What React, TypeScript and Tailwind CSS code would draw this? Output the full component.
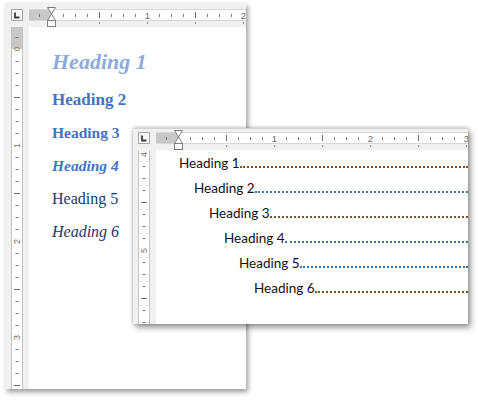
import React from "react";

const ORIGIN = 22;

function TabSelector() {
  return (
    <div className="w-[12px] h-[12px] border border-[#a6a6a6] bg-[#f7f7f7] flex items-center justify-center">
      <svg width="10" height="10" viewBox="0 0 10 10">
        <path d="M3 2.5V7.5H7.5" fill="none" stroke="#3c3c3c" strokeWidth="1.8" />
      </svg>
    </div>
  );
}

function HRuler({ width }: { width: number }) {
  const marks: React.ReactNode[] = [];
  for (let k = -1; ORIGIN + k * 12 < width + 6; k++) {
    const x = ORIGIN + k * 12 + 0.5;
    if (k === 0) continue;
    if (k % 8 === 0) {
      marks.push(
        <text key={k} x={x} y={12.5} fontSize="9.5" textAnchor="middle" fill="#6a6a6a" fontFamily="Liberation Sans, sans-serif">
          {k / 8}
        </text>
      );
    } else if (k % 4 === 0) {
      marks.push(<line key={k} x1={x} x2={x} y1={6} y2={12} stroke="#6e6e6e" />);
    } else {
      marks.push(<line key={k} x1={x} x2={x} y1={8} y2={11} stroke="#7a7a7a" />);
    }
  }
  const tabs: React.ReactNode[] = [];
  for (let m = 1; ORIGIN + m * 48 < width; m++) {
    const x = ORIGIN + m * 48 + 0.5;
    tabs.push(<line key={m} x1={x} x2={x} y1={16} y2={18} stroke="#8a8a8a" />);
  }
  const c = ORIGIN + 0.5;
  return (
    <svg width={width} height="21" className="block">
      <rect x="0" y="3" width={width} height="12" fill="#ffffff" />
      <rect x="0" y="3" width={ORIGIN} height="12" fill="#c8c8c8" />
      <line x1="0" x2={width} y1="3.5" y2="3.5" stroke="#d6d6d6" />
      <line x1="0" x2={width} y1="14.5" y2="14.5" stroke="#d6d6d6" />
      {marks}
      {tabs}
      <path d={`M${c - 4} 1.5H${c + 4}L${c} 8Z`} fill="#fff" stroke="#7d7d7d" />
      <path d={`M${c} 8L${c + 4} 14.5H${c - 4}Z`} fill="#fff" stroke="#7d7d7d" />
      <rect x={c - 4} y="14.5" width="8" height="6" fill="#fff" stroke="#7d7d7d" />
    </svg>
  );
}

function VRuler({ height, origin, base, dark }: { height: number; origin: number; base: number; dark: boolean }) {
  const marks: React.ReactNode[] = [];
  const kStart = -Math.floor(origin / 12);
  for (let k = kStart; origin + k * 12 < height; k++) {
    const y = origin + k * 12 + 0.5;
    if (k % 8 === 0) {
      if (k === 0 && dark) {
        marks.push(<rect key={k} x="3.5" y={y - 2} width="5" height="3" rx="1.5" fill="none" stroke="#a98a6e" />);
      } else {
        marks.push(
          <text key={k} x="6" y={y} fontSize="9" textAnchor="middle" dominantBaseline="central" fill="#7a6a5a" fontFamily="Liberation Sans, sans-serif" transform={`rotate(-90 6 ${y})`}>
            {k / 8 + base}
          </text>
        );
      }
    } else if (k % 4 === 0) {
      marks.push(<line key={k} x1="3" x2="9" y1={y} y2={y} stroke="#6e6e6e" />);
    } else {
      marks.push(<line key={k} x1="4.5" x2="7.5" y1={y} y2={y} stroke="#7a7a7a" />);
    }
  }
  return (
    <svg width="12" height={height} className="block">
      <rect x="0" y="0" width="12" height={height} fill="#ffffff" />
      {dark && <rect x="0" y="0" width="12" height={origin} fill="#c8c8c8" />}
      <line x1="0.5" x2="0.5" y1="0" y2={height} stroke="#c2c2c2" />
      <line x1="11.5" x2="11.5" y1="0" y2={height} stroke="#c2c2c2" />
      {marks}
    </svg>
  );
}

const headings = [
  { t: "Heading 1", c: "text-[22px] font-bold italic text-[#8eaadb] h-[36px]" },
  { t: "Heading 2", c: "text-[17px] font-bold text-[#4472c4] h-[33px] mt-[3px]" },
  { t: "Heading 3", c: "text-[15.5px] font-bold text-[#4472c4] h-[33px]" },
  { t: "Heading 4", c: "text-[15.5px] font-bold italic text-[#4472c4] h-[33px]" },
  { t: "Heading 5", c: "text-[16px] text-[#1f3864] h-[33px]" },
  { t: "Heading 6", c: "text-[16px] italic text-[#1f3864] h-[33px]" },
];

const toc = [
  { t: "Heading 1", pad: "pl-[23px]", dot: "border-[#8a4b1e]" },
  { t: "Heading 2", pad: "pl-[38px]", dot: "border-[#2e75b6]" },
  { t: "Heading 3", pad: "pl-[53px]", dot: "border-[#8a4b1e]" },
  { t: "Heading 4", pad: "pl-[68px]", dot: "border-[#2e75b6]" },
  { t: "Heading 5", pad: "pl-[83px]", dot: "border-[#2e75b6]" },
  { t: "Heading 6", pad: "pl-[98px]", dot: "border-[#8a4b1e]" },
];

export default function App() {
  return (
    <div className="relative w-[478px] h-[402px] bg-white overflow-hidden">
      {/* back window: heading styles */}
      <div className="absolute left-[5px] top-[3px] w-[241px] h-[386px] flex flex-col bg-[#f0f0f0] shadow-[2px_3px_5px_rgba(0,0,0,0.4)]">
        <div className="flex items-start h-[24px] shrink-0">
          <div className="ml-[6px] mt-[6px]">
            <TabSelector />
          </div>
          <div className="ml-[6px] mt-[3px]">
            <HRuler width={217} />
          </div>
        </div>
        <div className="flex flex-1 min-h-0">
          <div className="ml-[6px]">
            <VRuler height={362} origin={22} base={0} dark />
          </div>
          <div className="ml-[6px] flex-1 bg-white pt-[17px] pl-[23px] font-['Liberation_Serif',serif]">
            {headings.map((h) => (
              <div key={h.t} className={`flex items-center leading-none ${h.c}`}>
                {h.t}
              </div>
            ))}
          </div>
        </div>
      </div>

      {/* front window: table of contents */}
      <div className="absolute left-[133px] top-[128px] w-[335px] h-[196px] flex flex-col bg-[#f0f0f0] border-t border-[#d2d2d2] shadow-[0_0_4px_rgba(0,0,0,0.3),3px_4px_6px_rgba(0,0,0,0.35)]">
        <div className="flex items-start h-[21px] shrink-0">
          <div className="ml-[5px] mt-[3px]">
            <TabSelector />
          </div>
          <div className="ml-[6px]">
            <HRuler width={312} />
          </div>
        </div>
        <div className="flex flex-1 min-h-0">
          <div className="ml-[5px]">
            <VRuler height={174} origin={4} base={4} dark={false} />
          </div>
          <div className="ml-[6px] flex-1 bg-white overflow-hidden font-['Lato',sans-serif] text-[13.5px] text-[#111111]">
            {toc.map((r) => (
              <div key={r.t} className={`flex items-baseline h-[25px] pt-[3px] ${r.pad}`}>
                <span className="whitespace-nowrap leading-[20px]">{r.t}</span>
                <div className={`flex-1 border-b-2 border-dotted ${r.dot}`} />
              </div>
            ))}
          </div>
        </div>
      </div>
    </div>
  );
}
